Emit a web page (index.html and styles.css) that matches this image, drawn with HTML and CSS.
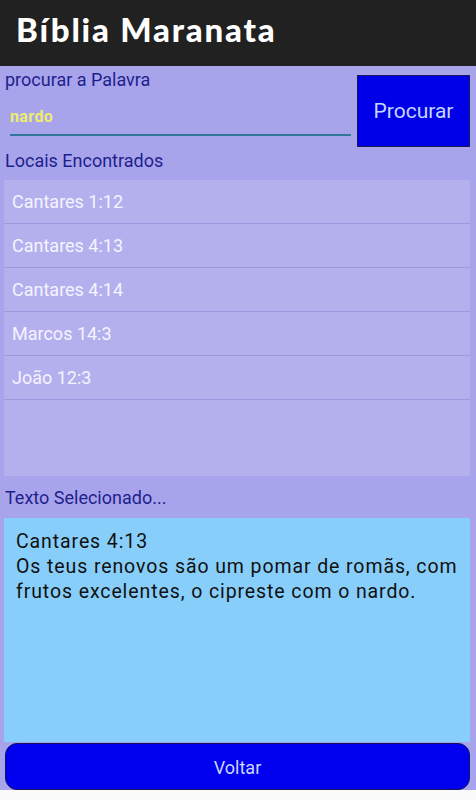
FILE: index.html
```html
<!DOCTYPE html>
<html lang="pt">
<head>
  <meta charset="UTF-8" />
  <meta name="viewport" content="width=device-width, initial-scale=1.0" />
  <title>Bíblia Maranata</title>
  <link rel="stylesheet" href="styles.css">
</head>
<body>
  <div class="app">
    <header class="topbar">
      <h1>Bíblia Maranata</h1>
    </header>

    <div class="search">
      <div class="search-left">
        <label for="word" class="caption">procurar a Palavra</label>
        <input type="text" id="word" value="nardo" />
      </div>
      <button class="search-btn">Procurar</button>
    </div>

    <div class="caption">Locais Encontrados</div>
    <ul class="results">
      <li>Cantares 1:12</li>
      <li>Cantares 4:13</li>
      <li>Cantares 4:14</li>
      <li>Marcos 14:3</li>
      <li>João 12:3</li>
    </ul>

    <div class="caption">Texto Selecionado...</div>
    <div class="verse">
      Cantares 4:13<br>
      Os teus renovos são um pomar de romãs, com frutos excelentes, o cipreste com o nardo.
    </div>

    <button class="back-btn">Voltar</button>
  </div>
</body>
</html>
```

FILE: styles.css
```css
body {
  margin: 0;
  background: #fafafa;
  font-family: Roboto, 'Noto Sans', sans-serif;
}

.app {
  height: 790px;
  background: #a8a4ec;
  display: flex;
  flex-direction: column;
}

.topbar {
  height: 66px;
  background: #212121;
  padding-left: 16px;
  box-sizing: border-box;
}

.topbar h1 {
  margin: 0;
  line-height: 58px;
  font-family: Lato, sans-serif;
  font-weight: 900;
  font-size: 33px;
  letter-spacing: 1.8px;
  color: #fff;
}

.caption {
  display: block;
  padding-left: 5px;
  font-size: 18px;
  line-height: 26px;
  color: #1f1f8c;
}

.search {
  display: flex;
  padding-right: 6px;
}

.search-left {
  flex: 1;
  padding-top: 1px;
}

.search-left input {
  display: block;
  width: 341px;
  margin: 14px 0 0 10px;
  padding: 0 0 8px 0;
  border: none;
  border-bottom: 2px solid #32779a;
  background: transparent;
  font-family: Roboto, sans-serif;
  font-weight: bold;
  font-size: 16px;
  letter-spacing: 0.4px;
  color: #eded6e;
  outline: none;
}

.search-btn {
  width: 113px;
  height: 72px;
  margin-top: 9px;
  background: #0000e8;
  border: 1px solid #1a1a55;
  color: #c4d6ff;
  font-family: Roboto, sans-serif;
  font-size: 21px;
}

.search + .caption {
  line-height: 28px;
  padding-bottom: 5px;
}

.results {
  list-style: none;
  margin: 0 6px 0 4px;
  padding: 0;
  height: 296px;
  background: #b4b0ee;
}

.results li {
  height: 43px;
  line-height: 43px;
  padding-left: 8px;
  border-bottom: 1px solid #9d98e0;
  color: #f4f4ff;
  font-size: 18px;
}

.results + .caption {
  line-height: 41px;
  padding-top: 1px;
}

.verse {
  flex: 1;
  margin: 0 6px 0 4px;
  padding: 11px 6px 11px 12px;
  background: #87cefa;
  color: #111;
  font-size: 19.5px;
  letter-spacing: 0.9px;
  line-height: 25px;
}

.back-btn {
  height: 47px;
  margin: 1px 6px 0 5px;
  padding-top: 3px;
  background: #0000ee;
  border: 1px solid #14145a;
  border-radius: 12px;
  color: #c8d8ff;
  font-family: Roboto, sans-serif;
  font-size: 18px;
}
```
